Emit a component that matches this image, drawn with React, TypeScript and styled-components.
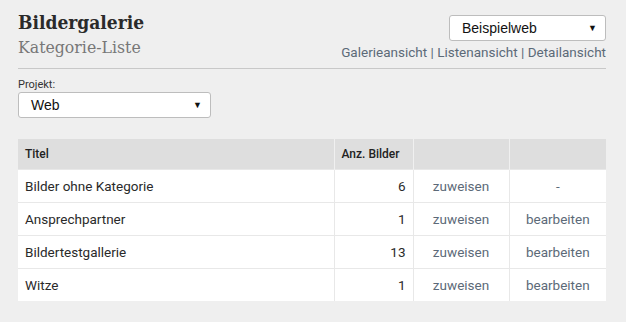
import React from 'react';
import styled, { createGlobalStyle } from 'styled-components';

const GlobalStyle = createGlobalStyle`
  html, body {
    margin: 0;
    padding: 0;
    background: #efefef;
  }
  body {
    font-family: Roboto, "Liberation Sans", sans-serif;
    color: #333;
  }
`;

const Page = styled.div`
  width: 588px;
  padding: 10px 20px 0 18px;
`;

const Header = styled.header`
  display: flex;
  justify-content: space-between;
  align-items: flex-start;
  padding-bottom: 8px;
  border-bottom: 1px solid #c8c8c8;
`;

const Titles = styled.div`
  display: flex;
  flex-direction: column;
`;

const Title = styled.h1`
  margin: 0;
  font-family: "DejaVu Serif Condensed", "DejaVu Serif", serif;
  font-weight: bold;
  font-size: 19px;
  line-height: 25px;
  color: #2a2a2a;
`;

const SubTitle = styled.h2`
  margin: 0;
  font-family: "DejaVu Serif Condensed", "DejaVu Serif", serif;
  font-weight: normal;
  font-size: 17.5px;
  line-height: 24px;
  color: #777;
`;

const RightBox = styled.div`
  display: flex;
  flex-direction: column;
  align-items: flex-end;
  padding-top: 5px;
  gap: 3px;
`;

const SelectBox = styled.div<{ $width: number }>`
  box-sizing: border-box;
  width: ${(p) => p.$width}px;
  height: 26px;
  background: #fff;
  border: 1px solid #bdbdbd;
  border-radius: 3px;
  display: flex;
  align-items: center;
  justify-content: space-between;
  padding: 0 8px 0 12px;
  font-family: "Liberation Sans", Arial, sans-serif;
  font-size: 14px;
  color: #111;
`;

const Arrow = styled.span`
  font-size: 9px;
  color: #111;
`;

const ViewLinks = styled.div`
  font-family: Roboto, "Liberation Sans", sans-serif;
  font-size: 13.5px;
  color: #5c6a78;
  line-height: 16px;
`;

const LinkText = styled.span`
  color: #5c6a78;
`;

const ProjectField = styled.div`
  display: flex;
  flex-direction: column;
  margin-top: 9px;
  gap: 1px;
`;

const Label = styled.label`
  font-family: Roboto, "Liberation Sans", sans-serif;
  font-size: 11px;
  color: #333;
  line-height: 13px;
`;

const Table = styled.table`
  margin-top: 21px;
  width: 588px;
  border-collapse: collapse;
  background: #fff;
  table-layout: fixed;
`;

const Th = styled.th<{ $w: number }>`
  box-sizing: border-box;
  width: ${(p) => p.$w}px;
  height: 30px;
  background: #dedede;
  text-align: left;
  padding: 0 7px;
  font-size: 12px;
  font-weight: 500;
  color: #222;
  border-left: 1px solid #f0f0f0;
  &:first-child {
    border-left: none;
  }
`;

const Td = styled.td<{ $align?: string; $link?: boolean }>`
  height: 32px;
  padding: 0 7px;
  font-size: 13.5px;
  text-align: ${(p) => p.$align || 'left'};
  color: ${(p) => (p.$link ? '#5c6a78' : '#2a2a2a')};
  border-top: 1px solid #e8e8e8;
  border-left: 1px solid #e8e8e8;
  &:first-child {
    border-left: none;
  }
`;

const rows = [
  { title: 'Bilder ohne Kategorie', count: 6, edit: false },
  { title: 'Ansprechpartner', count: 1, edit: true },
  { title: 'Bildertestgallerie', count: 13, edit: true },
  { title: 'Witze', count: 1, edit: true },
];

const App = () => {
  return (
    <>
      <GlobalStyle />
      <Page>
        <Header>
          <Titles>
            <Title>Bildergalerie</Title>
            <SubTitle>Kategorie-Liste</SubTitle>
          </Titles>
          <RightBox>
            <SelectBox $width={157}>
              <span>Beispielweb</span>
              <Arrow>▼</Arrow>
            </SelectBox>
            <ViewLinks>
              <LinkText>Galerieansicht</LinkText> | <LinkText>Listenansicht</LinkText> |{' '}
              <LinkText>Detailansicht</LinkText>
            </ViewLinks>
          </RightBox>
        </Header>
        <ProjectField>
          <Label>Projekt:</Label>
          <SelectBox $width={193}>
            <span>Web</span>
            <Arrow>▼</Arrow>
          </SelectBox>
        </ProjectField>
        <Table>
          <thead>
            <tr>
              <Th $w={316}>Titel</Th>
              <Th $w={79}>Anz. Bilder</Th>
              <Th $w={96}></Th>
              <Th $w={97}></Th>
            </tr>
          </thead>
          <tbody>
            {rows.map((r, i) => (
              <tr key={`row-${i}`}>
                <Td>{r.title}</Td>
                <Td $align="right">{r.count}</Td>
                <Td $align="center" $link>
                  zuweisen
                </Td>
                <Td $align="center" $link>
                  {r.edit ? 'bearbeiten' : '-'}
                </Td>
              </tr>
            ))}
          </tbody>
        </Table>
      </Page>
    </>
  );
};

export default App;
